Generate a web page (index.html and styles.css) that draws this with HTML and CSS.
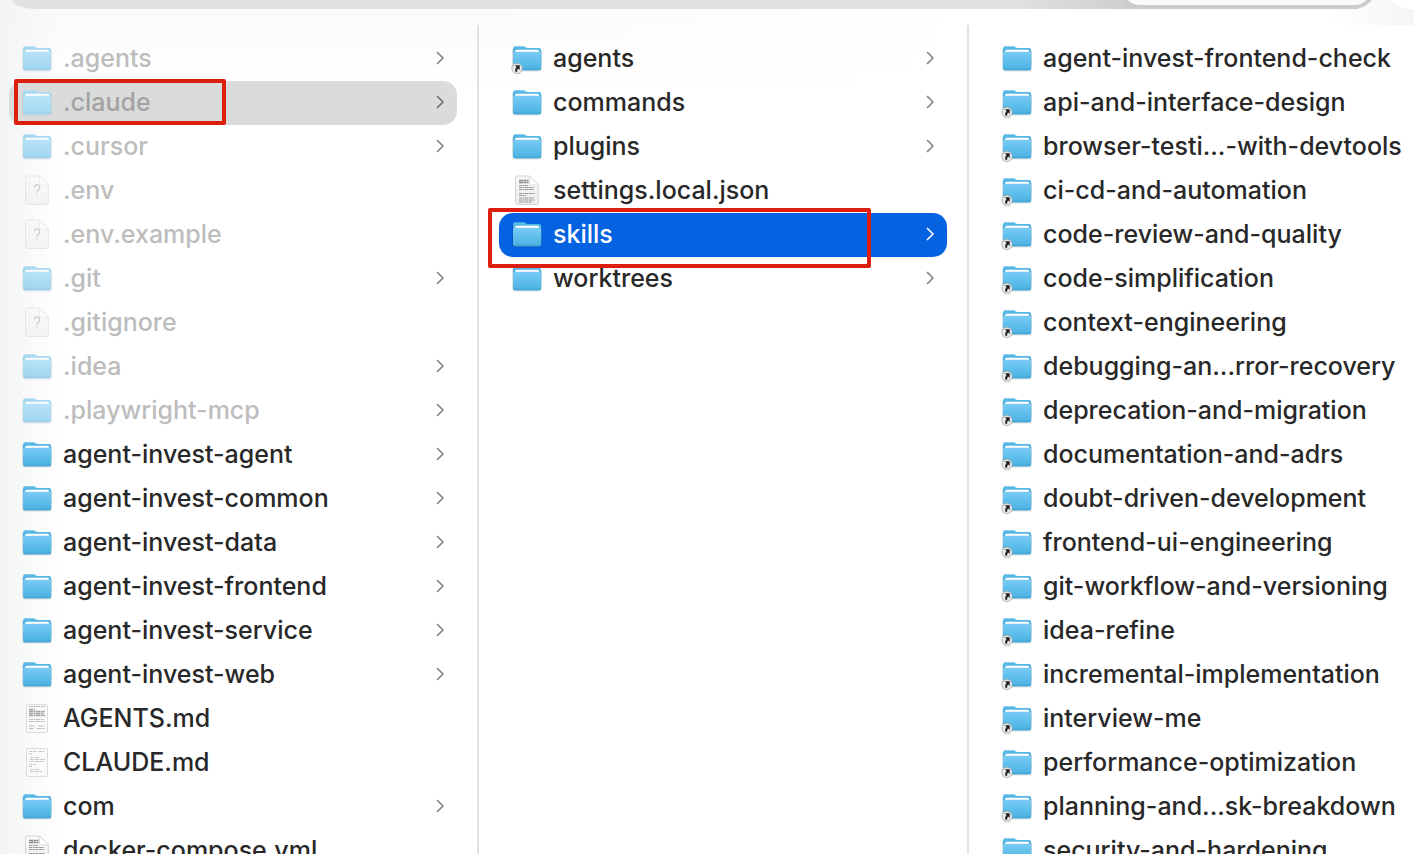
FILE: index.html
```html
<!DOCTYPE html>
<html lang="en">
<head>
<meta charset="utf-8">
<title>Files</title>
<link rel="stylesheet" href="styles.css">
</head>
<body>
<svg class="defs" aria-hidden="true">
  <defs>
    <linearGradient id="front" x1="0" y1="0" x2="0" y2="1"><stop offset="0" stop-color="#78cbf4"/><stop offset="0.85" stop-color="#4fb5e5"/><stop offset="1" stop-color="#3f9fd0"/></linearGradient>
    <linearGradient id="back" x1="0" y1="0" x2="0" y2="1"><stop offset="0" stop-color="#5bbcea"/><stop offset="1" stop-color="#3499cf"/></linearGradient>
    <linearGradient id="paper" x1="0" y1="0" x2="0" y2="1"><stop offset="0" stop-color="#fafafa"/><stop offset="1" stop-color="#ececec"/></linearGradient>
    <symbol id="folder" viewBox="0 0 32 32">
      <path d="M1.500 6v19.500a2.500 2.500 0 0 0 2.500 2.500h24a2.500 2.500 0 0 0 2.500-2.500V8" fill="none" stroke="#000" stroke-opacity=".12"/>
      <path d="M2 5.500A2.300 2.300 0 0 1 4.300 3.200H12c1.200 0 1.900.4 2.600 1 .6.500 1.200.8 2.200.8H28a2.200 2.200 0 0 1 2.200 2.200V20H2z" fill="url(#back)"/>
      <path d="M4 9.500C4 7.700 4.500 6.800 6 6.800h20.300c1.500 0 2 .9 2 2.700v3H4z" fill="#fff"/>
      <path d="M2 11c0-1.400.6-2.200 2-2.200h24.200c1.400 0 2 .8 2 2.200v14.300a2.200 2.200 0 0 1-2.200 2.200H4.200A2.200 2.200 0 0 1 2 25.300z" fill="url(#front)"/>
    </symbol>
    <symbol id="folder-dim" viewBox="0 0 32 32">
      <path d="M2 5.500A2.300 2.300 0 0 1 4.300 3.200H12c2 0 2.500 1.800 4.800 1.800H28a2.200 2.200 0 0 1 2.200 2.200v18.100a2.200 2.200 0 0 1-2.200 2.200H4.200A2.200 2.200 0 0 1 2 25.300z" fill="#fff"/>
      <use href="#folder" width="32" height="32" opacity=".5"/>
    </symbol>
    <symbol id="alias" viewBox="0 0 32 32">
      <use href="#folder" width="32" height="32"/>
      <circle cx="6" cy="25.500" r="5.200" fill="#e6e6e6" stroke="#a8a8a8" stroke-width=".7"/>
      <path d="M4 22.300h4.700V27L7.200 25.600C6.300 26.500 6 27.500 6.100 29L4.200 28.600C4 26.600 4.500 25.200 5.600 24z" fill="#222"/>
    </symbol>
    <symbol id="page" viewBox="0 0 32 32">
      <path d="M6.500 1H18.500L27.300 10v17.500a2 2 0 0 1-2 2h-18.800a2 2 0 0 1-2-2v-24.500a2 2 0 0 1 2-2z" fill="url(#paper)" stroke="#cfcfcf" stroke-width=".9"/>
      <path d="M18.500 1v7a2 2 0 0 0 2 2h6.800z" fill="#fff" stroke="#d2d2d2" stroke-width=".7"/>
    </symbol>
    <symbol id="unknown" viewBox="0 0 32 32">
      <use href="#page" width="32" height="32"/>
      <path d="M13.500 12.500c0-1.800 1-2.700 2.500-2.700s2.600 1 2.600 2.700c0 2.600-2.600 2.700-2.600 5.300M16 19.500v1.200" fill="none" stroke="#999" stroke-width="1.100"/>
    </symbol>
    <symbol id="text" viewBox="0 0 32 32">
      <use href="#page" width="32" height="32"/>
      <path d="M8 5.500h9.500M8 7.500h9.500" stroke="#8c8c8c" stroke-width="1.400" stroke-dasharray="4 .5 3 .4"/>
      <path d="M8 10.500h10M8 12.500h15M8 14.500h15M8 18.500h16M8 20.500h7M8 23h15M8 25h16M8 27h13" stroke="#9a9a9a" stroke-width="1" stroke-dasharray="3 .5 1.500 .4 4 .6"/>
    </symbol>
    <symbol id="agentsdoc" viewBox="0 0 32 32">
      <rect x="5.500" y="1.500" width="21" height="28" rx="1.500" fill="#fafafa" stroke="#dcdcdc"/>
      <path d="M8 3.500h16M8 18.500h16M8 16.500h15M8 23h6M17 23h7M8 25.500h5M16 25.500h8" stroke="#bdbdbd" stroke-dasharray="4 .6 2 .5"/>
      <path d="M8 6.500h6M8 8.500h16M8 10.500h15M8 12.500h16" stroke="#a2a2a2" stroke-width="1.300" stroke-dasharray="4 .6 2 .5"/>
    </symbol>
    <symbol id="claudedoc" viewBox="0 0 32 32">
      <rect x="5.500" y="1.500" width="21" height="28" rx="1.500" fill="#fafafa" stroke="#dcdcdc"/>
      <path d="M8 4.500h8M18 4.500h6M8 7h3M9 10.500h9M9 12.500h15M9 14.500h14M8 17.500h7M8 19.500h3M9 22.500h10M9 24.500h12" stroke="#c6c6c6" stroke-dasharray="3 .7 2 .5"/>
    </symbol>
    <symbol id="chevron" viewBox="0 0 12 16"><path d="M3.500 2.500 9 8l-5.500 5.500" fill="none" stroke="currentColor" stroke-width="1.700" stroke-linecap="round" stroke-linejoin="round"/></symbol>
  </defs>
</svg>
<header class="toolbar">
  <div class="bar"></div>
  <div class="search-pill"></div>
  <div class="round-pill"></div>
</header>
<main class="browser">
  <ul class="column first">
    <li><button class="row dim"><svg class="icon"><use href="#folder"/></svg><span class="name">.agents</span><svg class="chevron"><use href="#chevron"/></svg></button></li>
    <li><button class="row dim current"><svg class="icon"><use href="#folder-dim"/></svg><span class="name">.claude</span><svg class="chevron"><use href="#chevron"/></svg><span class="mark mark-claude"></span></button></li>
    <li><button class="row dim"><svg class="icon"><use href="#folder"/></svg><span class="name">.cursor</span><svg class="chevron"><use href="#chevron"/></svg></button></li>
    <li><button class="row dim"><svg class="icon"><use href="#unknown"/></svg><span class="name">.env</span></button></li>
    <li><button class="row dim"><svg class="icon"><use href="#unknown"/></svg><span class="name">.env.example</span></button></li>
    <li><button class="row dim"><svg class="icon"><use href="#folder"/></svg><span class="name">.git</span><svg class="chevron"><use href="#chevron"/></svg></button></li>
    <li><button class="row dim"><svg class="icon"><use href="#unknown"/></svg><span class="name">.gitignore</span></button></li>
    <li><button class="row dim"><svg class="icon"><use href="#folder"/></svg><span class="name">.idea</span><svg class="chevron"><use href="#chevron"/></svg></button></li>
    <li><button class="row dim"><svg class="icon"><use href="#folder"/></svg><span class="name">.playwright-mcp</span><svg class="chevron"><use href="#chevron"/></svg></button></li>
    <li><button class="row"><svg class="icon"><use href="#folder"/></svg><span class="name">agent-invest-agent</span><svg class="chevron"><use href="#chevron"/></svg></button></li>
    <li><button class="row"><svg class="icon"><use href="#folder"/></svg><span class="name">agent-invest-common</span><svg class="chevron"><use href="#chevron"/></svg></button></li>
    <li><button class="row"><svg class="icon"><use href="#folder"/></svg><span class="name">agent-invest-data</span><svg class="chevron"><use href="#chevron"/></svg></button></li>
    <li><button class="row"><svg class="icon"><use href="#folder"/></svg><span class="name">agent-invest-frontend</span><svg class="chevron"><use href="#chevron"/></svg></button></li>
    <li><button class="row"><svg class="icon"><use href="#folder"/></svg><span class="name">agent-invest-service</span><svg class="chevron"><use href="#chevron"/></svg></button></li>
    <li><button class="row"><svg class="icon"><use href="#folder"/></svg><span class="name">agent-invest-web</span><svg class="chevron"><use href="#chevron"/></svg></button></li>
    <li><button class="row"><svg class="icon"><use href="#agentsdoc"/></svg><span class="name">AGENTS.md</span></button></li>
    <li><button class="row"><svg class="icon"><use href="#claudedoc"/></svg><span class="name">CLAUDE.md</span></button></li>
    <li><button class="row"><svg class="icon"><use href="#folder"/></svg><span class="name">com</span><svg class="chevron"><use href="#chevron"/></svg></button></li>
    <li><button class="row"><svg class="icon"><use href="#text"/></svg><span class="name">docker-compose.yml</span></button></li>
  </ul>
  <ul class="column">
    <li><button class="row"><svg class="icon"><use href="#alias"/></svg><span class="name">agents</span><svg class="chevron"><use href="#chevron"/></svg></button></li>
    <li><button class="row"><svg class="icon"><use href="#folder"/></svg><span class="name">commands</span><svg class="chevron"><use href="#chevron"/></svg></button></li>
    <li><button class="row"><svg class="icon"><use href="#folder"/></svg><span class="name">plugins</span><svg class="chevron"><use href="#chevron"/></svg></button></li>
    <li><button class="row"><svg class="icon"><use href="#text"/></svg><span class="name">settings.local.json</span></button></li>
    <li><button class="row selected"><svg class="icon"><use href="#folder"/></svg><span class="name">skills</span><svg class="chevron"><use href="#chevron"/></svg><span class="mark mark-skills"></span></button></li>
    <li><button class="row"><svg class="icon"><use href="#folder"/></svg><span class="name">worktrees</span><svg class="chevron"><use href="#chevron"/></svg></button></li>
  </ul>
  <ul class="column last">
    <li><button class="row"><svg class="icon"><use href="#folder"/></svg><span class="name">agent-invest-frontend-check</span></button></li>
    <li><button class="row"><svg class="icon"><use href="#alias"/></svg><span class="name">api-and-interface-design</span></button></li>
    <li><button class="row"><svg class="icon"><use href="#alias"/></svg><span class="name">browser-testi...-with-devtools</span></button></li>
    <li><button class="row"><svg class="icon"><use href="#alias"/></svg><span class="name">ci-cd-and-automation</span></button></li>
    <li><button class="row"><svg class="icon"><use href="#alias"/></svg><span class="name">code-review-and-quality</span></button></li>
    <li><button class="row"><svg class="icon"><use href="#alias"/></svg><span class="name">code-simplification</span></button></li>
    <li><button class="row"><svg class="icon"><use href="#alias"/></svg><span class="name">context-engineering</span></button></li>
    <li><button class="row"><svg class="icon"><use href="#alias"/></svg><span class="name">debugging-an...rror-recovery</span></button></li>
    <li><button class="row"><svg class="icon"><use href="#alias"/></svg><span class="name">deprecation-and-migration</span></button></li>
    <li><button class="row"><svg class="icon"><use href="#alias"/></svg><span class="name">documentation-and-adrs</span></button></li>
    <li><button class="row"><svg class="icon"><use href="#alias"/></svg><span class="name">doubt-driven-development</span></button></li>
    <li><button class="row"><svg class="icon"><use href="#alias"/></svg><span class="name">frontend-ui-engineering</span></button></li>
    <li><button class="row"><svg class="icon"><use href="#alias"/></svg><span class="name">git-workflow-and-versioning</span></button></li>
    <li><button class="row"><svg class="icon"><use href="#alias"/></svg><span class="name">idea-refine</span></button></li>
    <li><button class="row"><svg class="icon"><use href="#alias"/></svg><span class="name">incremental-implementation</span></button></li>
    <li><button class="row"><svg class="icon"><use href="#alias"/></svg><span class="name">interview-me</span></button></li>
    <li><button class="row"><svg class="icon"><use href="#alias"/></svg><span class="name">performance-optimization</span></button></li>
    <li><button class="row"><svg class="icon"><use href="#alias"/></svg><span class="name">planning-and...sk-breakdown</span></button></li>
    <li><button class="row"><svg class="icon"><use href="#alias"/></svg><span class="name">security-and-hardening</span></button></li>
  </ul>
</main>
</body>
</html>
```
FILE: styles.css
```css
* { box-sizing: border-box; }

body {
  margin: 0;
  height: 100vh;
  overflow: hidden;
  display: flex;
  flex-direction: column;
  font-family: Inter, "Liberation Sans", sans-serif;
  font-size: 25px;
  font-weight: 500;
  color: #282828;
  background:
    linear-gradient(to right, #f3f4f4, rgba(255, 255, 255, 0) 60px),
    linear-gradient(to right, rgba(255, 255, 255, 0) 30%, #fff 68%),
    linear-gradient(to bottom, #f9f9f9, #fff 90px);
}

.defs { position: absolute; width: 0; height: 0; }

.toolbar {
  position: relative;
  flex: none;
  height: 25px;
  overflow: hidden;
  background: linear-gradient(to right, rgba(244, 245, 245, 0) 94%, #f4f5f5);
}

.bar {
  height: 9px;
  margin: 0 56px 0 12px;
  border-bottom-left-radius: 24px 9px;
  background: linear-gradient(to right, #e2e2e2 74%, #cccccc 84%);
}

.search-pill {
  position: absolute;
  right: 38px;
  top: -35px;
  width: 258px;
  height: 44px;
  border: 4px solid #cccccc;
  border-radius: 22px;
  background: #fbfbfb;
}

.round-pill {
  position: absolute;
  right: -26px;
  top: -35px;
  width: 52px;
  height: 44px;
  border-radius: 22px;
  background: #fff;
}

.browser {
  flex: 1;
  min-height: 0;
  display: grid;
  grid-template-columns: minmax(0, 479fr) minmax(0, 490fr) minmax(0, 445fr);
}

.column {
  margin: 0;
  padding: 12px 20px 0;
  list-style: none;
  border-right: 2px solid #e2e2e2;
}

.first { padding-left: 9px; }
.last { padding-right: 0; border-right: 0; }

.row {
  position: relative;
  display: flex;
  align-items: center;
  gap: 10px;
  width: 100%;
  height: 44px;
  padding: 0 11px 0 12px;
  border: 0;
  border-radius: 14px;
  background: none;
  font: inherit;
  color: inherit;
  text-align: left;
}

.icon { flex: none; width: 32px; height: 32px; }
.name { flex: 1; white-space: nowrap; line-height: 32px; padding-bottom: 2px; }
.chevron { flex: none; width: 12px; height: 16px; margin-bottom: 2px; color: #858585; }

.dim { color: #bdbdbd; }
.dim .icon { opacity: 0.5; }
.current { background: #dadcdb; color: #a3a3a3; }
.current .icon { opacity: 1; }
.current .chevron { color: #707070; }
.selected { z-index: 1; background: #0562e1; color: #fff; }
.selected .chevron { color: #fff; }

.mark { position: absolute; border: 4px solid #dc1f0e; border-radius: 2px; }
.mark-claude { left: 5px; top: -2px; width: 212px; height: 46px; }
.mark-skills { left: -11px; top: -5px; width: 383px; height: 60px; }
```
